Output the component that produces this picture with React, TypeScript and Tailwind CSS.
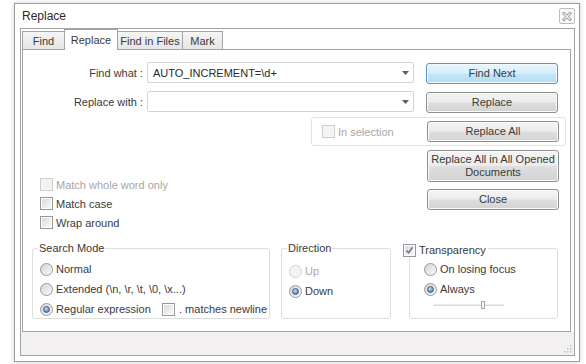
import React from "react";

const FONT = { fontFamily: '"Liberation Sans", Arial, sans-serif' };

function Check({ checked = false, disabled = false }: { checked?: boolean; disabled?: boolean }) {
  return (
    <span
      className={`w-[13px] h-[13px] shrink-0 border flex items-center justify-center ${
        disabled ? "border-[#cdcdcd] bg-[#f7f7f7]" : "border-[#979797] bg-white"
      }`}
    >
      <span
        className={`w-[9px] h-[9px] flex items-center justify-center ${
          disabled
            ? "bg-[#f3f3f3]"
            : "bg-[linear-gradient(135deg,#dadada,#f9f9f9)]"
        }`}
      >
        {checked && (
          <svg width="9" height="9" viewBox="0 0 9 9">
            <path d="M1.5 4.5 L3.6 6.8 L7.6 1.2" fill="none" stroke="#6a7b96" strokeWidth="1.6" />
          </svg>
        )}
      </span>
    </span>
  );
}

function Radio({ checked = false, disabled = false }: { checked?: boolean; disabled?: boolean }) {
  return (
    <span
      className={`w-[13px] h-[13px] shrink-0 rounded-full border flex items-center justify-center ${
        disabled
          ? "border-[#d2d2d2] bg-[#f4f4f4]"
          : "border-[#989898] bg-[linear-gradient(135deg,#d4d4d4,#fafafa)]"
      }`}
    >
      {checked && (
        <span className="w-[7px] h-[7px] rounded-full border border-[#3e5f86] bg-[radial-gradient(circle_at_40%_35%,#c9e1f5,#6b94c0_60%,#3d6594)]" />
      )}
    </span>
  );
}

function Btn({ children, h = "h-[21px]", primary = false }: { children: React.ReactNode; h?: string; primary?: boolean }) {
  return (
    <div
      className={`w-[132px] ${h} rounded-[3px] border flex items-center justify-center text-center leading-[13px] text-[#3a3a3a] ${
        primary
          ? "border-[#5b97c0] bg-[linear-gradient(to_bottom,#eaf6fd,#d3eefb_50%,#c2e6f8_51%,#b4def5)] shadow-[inset_0_0_0_1px_#f4fbff]"
          : "border-[#8e8e8e] bg-[linear-gradient(to_bottom,#f4f4f4,#ececec_48%,#dedede_52%,#d3d3d3)] shadow-[inset_0_0_0_1px_#fbfbfb]"
      }`}
    >
      {children}
    </div>
  );
}

function Combo({ value }: { value?: string }) {
  return (
    <div className="w-[267px] h-[21px] ml-[4px] border border-[#d4d4d4] rounded-[2px] bg-white flex items-center pl-[5px] pr-[4px]">
      <span className="flex-1 text-[#2a2a2a] whitespace-nowrap">{value}</span>
      <svg width="7" height="4" viewBox="0 0 7 4">
        <path d="M0 0 H7 L3.5 4 Z" fill="#5c5c5c" />
      </svg>
    </div>
  );
}

function Tab({ label, w, active = false, first = false }: { label: string; w: string; active?: boolean; first?: boolean }) {
  return (
    <div
      className={`${w} ${first ? "" : "-ml-px"} border-l border-r border-t border-[#a3a3a3] flex justify-center ${
        active
          ? "h-[21px] -mb-px relative z-10 bg-white pt-[3px]"
          : "h-[18px] bg-[linear-gradient(to_bottom,#f5f5f5,#e6e6e6)] pt-[2px]"
      } text-[#3a3a3a]`}
    >
      {label}
    </div>
  );
}

export default function App() {
  return (
    <div className="w-[586px] h-[364px] bg-white overflow-hidden text-[11px] leading-[14px] text-[#3a3a3a]" style={FONT}>
      <div className="ml-[14px] mt-[3px] w-[566px] h-[359px] border border-[#9c9c9c] bg-white flex flex-col shadow-[0_0_5px_rgba(0,0,0,0.18)]">
        {/* title bar */}
        <div className="h-[24px] shrink-0 flex items-center pl-[7px] pr-[4px]">
          <span className="flex-1 text-[12px] text-[#2b2b2b]">Replace</span>
          <div className="w-[16px] h-[16px] rounded-[2px] border border-[#bdbdbd] flex items-center justify-center bg-[#fafafa]">
            <svg width="10" height="9" viewBox="0 0 10 9">
              <path d="M2 1.5 L8 7.5 M8 1.5 L2 7.5" stroke="#9a9a9a" strokeWidth="3" strokeLinecap="square" />
              <path d="M2 1.5 L8 7.5 M8 1.5 L2 7.5" stroke="#f4f4f4" strokeWidth="1.2" strokeLinecap="square" />
            </svg>
          </div>
        </div>

        {/* client */}
        <div className="ml-[5px] w-[555px] h-[328px] border border-[#a3a3a3] flex flex-col">
          {/* tabs */}
          <div className="h-[20px] pl-[1px] flex items-end">
            <Tab label="Find" w="w-[43px]" first />
            <Tab label="Replace" w="w-[54px]" active />
            <Tab label="Find in Files" w="w-[66px]" />
            <Tab label="Mark" w="w-[41px]" />
          </div>

          {/* panel */}
          <div className="ml-[1px] w-[549px] h-[283px] border border-[#a3a3a3] bg-white flex flex-col">
            {/* Row A */}
            <div className="mt-[12px] flex items-start">
              <div className="w-[120px] h-[21px] flex items-center justify-end">Find what :</div>
              <Combo value="AUTO_INCREMENT=\d+" />
              <div className="ml-[12px] mt-[1px]">
                <Btn primary>Find Next</Btn>
              </div>
            </div>

            {/* Row B */}
            <div className="mt-[7px] flex items-start">
              <div className="w-[120px] h-[21px] flex items-center justify-end">Replace with :</div>
              <Combo />
              <div className="ml-[12px] mt-[1px]">
                <Btn>Replace</Btn>
              </div>
            </div>

            {/* Row C: in selection */}
            <div className="mt-[4px] ml-[288px] w-[255px] h-[29px] border border-[#e2e2e2] rounded-[3px] flex items-center pl-[10px] pr-[6px]">
              <Check disabled />
              <span className="ml-[3px] text-[#a6a6a6] flex-1">In selection</span>
              <Btn>Replace All</Btn>
            </div>

            {/* Row D */}
            <div className="flex justify-between pr-[11px]">
              <div className="ml-[17px] mt-[29px] flex flex-col">
                <div className="h-[19px] flex items-center">
                  <Check disabled />
                  <span className="ml-[3px] text-[#a6a6a6]">Match whole word only</span>
                </div>
                <div className="h-[19px] flex items-center">
                  <Check />
                  <span className="ml-[3px]">Match case</span>
                </div>
                <div className="h-[19px] flex items-center">
                  <Check />
                  <span className="ml-[3px]">Wrap around</span>
                </div>
              </div>
              <div className="mt-[4px] flex flex-col gap-[7px]">
                <Btn h="h-[32px]">
                  Replace All in All Opened
                  <br />
                  Documents
                </Btn>
                <Btn>Close</Btn>
              </div>
            </div>

            {/* Groups */}
            <div className="mt-[16px] flex">
              <div className="relative ml-[9px] w-[238px] h-[71px] border border-[#dedede] rounded-[3px] pl-[7px] pt-[10px]">
                <span className="absolute left-[5px] -top-[8px] px-[1px] bg-white">Search Mode</span>
                <div className="h-[20px] flex items-center">
                  <Radio />
                  <span className="ml-[3px]">Normal</span>
                </div>
                <div className="h-[20px] flex items-center">
                  <Radio />
                  <span className="ml-[3px]">Extended (\n, \r, \t, \0, \x...)</span>
                </div>
                <div className="h-[20px] flex items-center">
                  <Radio checked />
                  <span className="ml-[3px] w-[106px]">Regular expression</span>
                  <Check />
                  <span className="ml-[4px]">. matches newline</span>
                </div>
              </div>

              <div className="relative ml-[11px] w-[110px] h-[71px] border border-[#dedede] rounded-[3px] pl-[7px] pt-[12px]">
                <span className="absolute left-[5px] -top-[8px] px-[1px] bg-white">Direction</span>
                <div className="h-[20px] flex items-center">
                  <Radio disabled />
                  <span className="ml-[3px] text-[#a6a6a6]">Up</span>
                </div>
                <div className="h-[20px] flex items-center">
                  <Radio checked />
                  <span className="ml-[3px]">Down</span>
                </div>
              </div>

              <div className="relative ml-[18px] w-[149px] h-[71px] border border-[#dedede] rounded-[3px] pl-[14px] pt-[10px]">
                <span className="absolute -left-[7px] -top-[6px] pr-[2px] bg-white flex items-center h-[14px]">
                  <Check checked />
                  <span className="ml-[3px]">Transparency</span>
                </span>
                <div className="h-[20px] flex items-center">
                  <Radio />
                  <span className="ml-[3px]">On losing focus</span>
                </div>
                <div className="h-[20px] flex items-center">
                  <Radio checked />
                  <span className="ml-[3px]">Always</span>
                </div>
                <div className="ml-[10px] h-[10px]">
                  <svg width="70" height="10" viewBox="0 0 70 10">
                    <line x1="0" y1="6.5" x2="70" y2="6.5" stroke="#d6d6d6" strokeWidth="1" />
                    <line x1="0" y1="5.5" x2="70" y2="5.5" stroke="#ececec" strokeWidth="1" />
                    <rect x="47.5" y="2.5" width="3" height="7" fill="#f4f4f4" stroke="#a8a8a8" strokeWidth="1" />
                  </svg>
                </div>
              </div>
            </div>
          </div>

          {/* status strip */}
          <div className="flex-1 bg-[#f2f0f0] flex items-end justify-end pr-[2px] pb-[2px]">
            <svg width="9" height="9" viewBox="0 0 9 9">
              <g fill="#c4c4c4">
                <rect x="7" y="1" width="1.5" height="1.5" />
                <rect x="4" y="4" width="1.5" height="1.5" />
                <rect x="7" y="4" width="1.5" height="1.5" />
                <rect x="1" y="7" width="1.5" height="1.5" />
                <rect x="4" y="7" width="1.5" height="1.5" />
                <rect x="7" y="7" width="1.5" height="1.5" />
              </g>
            </svg>
          </div>
        </div>
      </div>
    </div>
  );
}
